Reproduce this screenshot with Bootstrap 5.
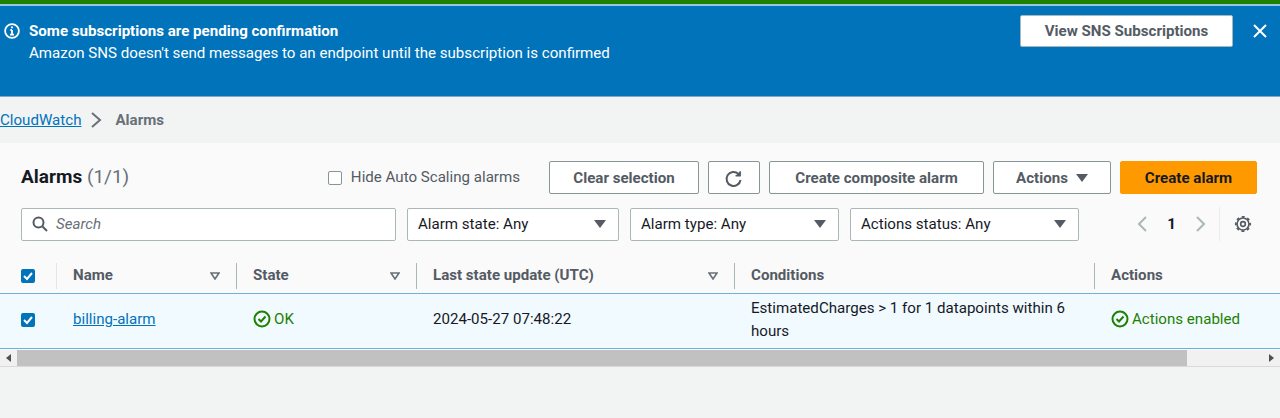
<!DOCTYPE html>
<html lang="en">
<head>
  <meta charset="UTF-8">
  <title>CloudWatch — Alarms</title>
  <link href="https://cdn.jsdelivr.net/npm/bootstrap@5.3.2/dist/css/bootstrap.min.css" rel="stylesheet">
  <style>
    body { background: #f2f3f3; font-family: Roboto, "Liberation Sans", sans-serif; font-size: 15.1px; color: #16191f; height: 418px; overflow: hidden; }
    .top-line { height: 6px; background: #1d8102; border-bottom: 2px solid #9cc4de; }
    .sns-flash { height: 91px; background: #0073bb; color: #fff; padding: 15px 13px 0 4px; border-bottom: 1px solid #7aa9c9; }
    .flash-icon { margin: 2px 9px 0 0; }
    .sns-flash .flash-title { font-weight: 700; line-height: 20px; }
    .sns-flash .flash-text { line-height: 24px; }
    .flash-right { margin-top: -6px; }
    .sns-btn { width: 213px; height: 32px; background: #fff; color: #545b64; font-weight: 700; font-size: 15.1px; border: 1px solid #aab7b8; border-radius: 2px; padding: 0; margin-right: 20px; }
    .crumbs { height: 46px; line-height: 46px; }
    .crumbs a { color: #0073bb; }
    .crumbs svg { margin: 0 10px 0 8px; }
    .crumbs .here { color: #687078; font-weight: 700; }
    .alarm-panel { height: 224px; background: #fafafa; border-bottom: 2px solid #d5dbdb; }
    .panel-head { height: 116px; padding: 18px 23px 0 21px; }
    .panel-title { font-size: 19px; font-weight: 700; line-height: 30px; padding-bottom: 2px; }
    .panel-title span { font-weight: 400; color: #687078; }
    .aws-btn { height: 33px; background: #fff; color: #545b64; font-weight: 700; font-size: 15.1px; border: 1px solid #879596; border-radius: 2px; padding: 1px 0 0; margin-right: 9px; }
    .aws-btn-primary { background: #ff9900; border-color: #ff9900; color: #16191f; margin-right: 0; }
    .hide-check { width: 14px; height: 14px; background: #fff; border: 1px solid #879596; border-radius: 2px; }
    .hide-label { color: #545b64; margin: 0 29px 0 9px; }
    .aws-field { height: 33px; background: #fff; border: 1px solid #aab7b8; border-radius: 2px; padding: 0 12px 0 10px; color: #16191f; }
    .field-search { width: 375px; color: #687078; font-style: italic; }
    .arrow-down { width: 0; height: 0; border-left: 6px solid transparent; border-right: 6px solid transparent; border-top: 8px solid #545b64; }
    .page-num { font-weight: 700; margin: 0 19px; }
    .alarm-table { table-layout: fixed; width: 1280px; margin: 0; }
    .alarm-table th { height: 34px; padding: 0 0 0 16px; background: #fafafa; color: #545b64; font-weight: 700; border-bottom: 0; vertical-align: middle; }
    .alarm-table td { height: 55px; padding: 0 8px 2px 16px; background: #f1faff; color: #16191f; vertical-align: middle; border-top: 1px solid #6fb0d8; border-bottom: 1px solid #6fb0d8; line-height: 23px; }
    .alarm-table .name-cell { padding-left: 16px; }
    .alarm-table .check-cell { padding-left: 21px; }
    .sep-right { border-right: 1px solid #aab7b8; }
    .sep-faint { border-right: 1px solid #e3e6e6; }
    .th-box { height: 26px; display: flex; align-items: center; justify-content: space-between; padding-right: 16px; }
    .aws-check { width: 14px; height: 14px; background: #0073bb; border-radius: 2px; display: flex; align-items: center; justify-content: center; }
    .alarm-table td.state-ok, .state-ok { color: #1d8102; }
    .alarm-table td.state-ok { padding-top: 2px; padding-bottom: 0; }
    .state-ok .d-inline-flex { gap: 3px !important; }
    .name-link { color: #0073bb; }
    .fake-scroll { height: 16px; display: flex; background: #f1f1f1; margin-top: 1px; }
    .scroll-end { width: 17px; display: flex; align-items: center; justify-content: center; color: #505050; }
    .scroll-thumb { width: 1170px; background: #c1c1c1; }
    .scroll-rest { flex: 1; }
    .btn-clear { width: 150px; }
    .btn-refresh { width: 52px; }
    .btn-composite { width: 215px; }
    .btn-actions { width: 118px; }
    .btn-create { width: 137px; }
    .filter-row { margin-top: 13px; }
    .field-state { width: 212px; margin-left: 11px; }
    .field-type { width: 209px; margin-left: 11px; }
    .field-status { width: 229px; margin-left: 11px; }
    .gear-box { margin-left: 12px; padding-left: 14px; margin-right: 5px; border-left: 1px solid #eaeded; height: 34px; display: flex; align-items: center; }
    .c1 { width: 57px; } .c2 { width: 180px; } .c3 { width: 180px; } .c4 { width: 318px; } .c5 { width: 360px; } .c6 { width: 185px; }
  </style>
</head>
<body>
<div class="top-line"></div>

<div class="sns-flash d-flex justify-content-between align-items-start">
  <div class="d-flex">
    <svg class="flash-icon" width="16" height="16" viewBox="0 0 16 16" fill="none" stroke="#fff" stroke-width="1.8">
      <circle cx="8" cy="8" r="6.9"/>
      <path d="M8 7v4.5M6 11.7h4M6.4 7H8"/>
      <path d="M8 3.6v1.7" stroke-width="2"/>
    </svg>
    <div>
      <div class="flash-title">Some subscriptions are pending confirmation</div>
      <div class="flash-text">Amazon SNS doesn't send messages to an endpoint until the subscription is confirmed</div>
    </div>
  </div>
  <div class="d-flex align-items-center flash-right">
    <button class="sns-btn" type="button">View SNS Subscriptions</button>
    <svg width="14" height="14" viewBox="0 0 14 14" stroke="#fff" stroke-width="2" fill="none"><path d="M1 1l12 12M13 1L1 13"/></svg>
  </div>
</div>

<div class="crumbs d-flex align-items-center">
  <a href="#">CloudWatch</a>
  <svg width="16" height="18" viewBox="0 0 16 18" fill="none" stroke="#687078" stroke-width="2"><path d="M3 2l8 7-8 7"/></svg>
  <span class="here">Alarms</span>
</div>

<div class="alarm-panel">
  <div class="panel-head">
    <div class="d-flex align-items-center">
      <div class="panel-title me-auto">Alarms <span>(1/1)</span></div>
      <span class="hide-check"></span>
      <span class="hide-label">Hide Auto Scaling alarms</span>
      <button class="aws-btn btn-clear" type="button">Clear selection</button>
      <button class="aws-btn btn-refresh" type="button">
        <svg width="20" height="20" viewBox="0 0 20 20" fill="none" stroke="#545b64" stroke-width="2"><path d="M16.5 11a7 7 0 1 1-2.2-6.2"/><path d="M16.2 2.2v4.6h-4.6" fill="#545b64" stroke-width="1.4"/></svg>
      </button>
      <button class="aws-btn btn-composite" type="button">Create composite alarm</button>
      <button class="aws-btn btn-actions d-inline-flex align-items-center justify-content-center" type="button">Actions<span class="arrow-down ms-2"></span></button>
      <button class="aws-btn aws-btn-primary btn-create" type="button">Create alarm</button>
    </div>
    <div class="d-flex align-items-center filter-row">
      <div class="aws-field field-search d-flex align-items-center">
        <svg class="me-2" width="16" height="16" viewBox="0 0 16 16" fill="none" stroke="#545b64" stroke-width="2"><circle cx="6.5" cy="6.5" r="5"/><path d="M10.5 10.5l4.5 4.5"/></svg>
        Search
      </div>
      <div class="aws-field field-state d-flex align-items-center justify-content-between">Alarm state: Any<span class="arrow-down"></span></div>
      <div class="aws-field field-type d-flex align-items-center justify-content-between">Alarm type: Any<span class="arrow-down"></span></div>
      <div class="aws-field field-status d-flex align-items-center justify-content-between">Actions status: Any<span class="arrow-down"></span></div>
      <svg class="ms-auto" width="12" height="18" viewBox="0 0 12 18" fill="none" stroke="#aab7b8" stroke-width="2"><path d="M10 2L3 9l7 7"/></svg>
      <span class="page-num">1</span>
      <svg width="12" height="18" viewBox="0 0 12 18" fill="none" stroke="#aab7b8" stroke-width="2"><path d="M2 2l7 7-7 7"/></svg>
      <div class="gear-box">
        <svg width="18" height="18" viewBox="0 0 20 20" fill="none" stroke="#545b64">
          <circle cx="10" cy="10" r="6.6" stroke-width="1.8"/>
          <circle cx="10" cy="10" r="8" stroke-width="2" stroke-dasharray="3.2 3.08" stroke-dashoffset="1.6"/>
          <circle cx="10" cy="10" r="2.6" stroke-width="1.8"/>
        </svg>
      </div>
    </div>
  </div>

  <table class="table alarm-table">
    <colgroup><col class="c1"><col class="c2"><col class="c3"><col class="c4"><col class="c5"><col class="c6"></colgroup>
    <thead>
      <tr>
        <th class="check-cell"><div class="th-box sep-faint"><span class="aws-check"><svg width="10" height="10" viewBox="0 0 10 10" fill="none" stroke="#fff" stroke-width="2"><path d="M1 5l3 3 5-6"/></svg></span></div></th>
        <th class="name-cell"><div class="th-box sep-right">Name <svg width="10" height="8" viewBox="0 0 10 8" fill="none" stroke="#687078" stroke-width="1.6"><path d="M1 1h8L5 7z"/></svg></div></th>
        <th><div class="th-box sep-right">State <svg width="10" height="8" viewBox="0 0 10 8" fill="none" stroke="#687078" stroke-width="1.6"><path d="M1 1h8L5 7z"/></svg></div></th>
        <th><div class="th-box sep-right">Last state update (UTC) <svg width="10" height="8" viewBox="0 0 10 8" fill="none" stroke="#687078" stroke-width="1.6"><path d="M1 1h8L5 7z"/></svg></div></th>
        <th><div class="th-box sep-right">Conditions</div></th>
        <th>Actions</th>
      </tr>
    </thead>
    <tbody>
      <tr>
        <td class="check-cell"><span class="aws-check"><svg width="10" height="10" viewBox="0 0 10 10" fill="none" stroke="#fff" stroke-width="2"><path d="M1 5l3 3 5-6"/></svg></span></td>
        <td class="name-cell"><a class="name-link" href="#">billing-alarm</a></td>
        <td class="state-ok"><span class="d-inline-flex align-items-center gap-1"><svg width="18" height="18" viewBox="0 0 18 18" fill="none" stroke="#1d8102" stroke-width="2"><circle cx="9" cy="9" r="7.5"/><path d="M5.5 9l2.5 2.5 4.5-5"/></svg>OK</span></td>
        <td>2024-05-27 07:48:22</td>
        <td>EstimatedCharges &gt; 1 for 1 datapoints within 6 hours</td>
        <td class="state-ok"><span class="d-inline-flex align-items-center gap-1 text-nowrap"><svg width="18" height="18" viewBox="0 0 18 18" fill="none" stroke="#1d8102" stroke-width="2"><circle cx="9" cy="9" r="7.5"/><path d="M5.5 9l2.5 2.5 4.5-5"/></svg>Actions enabled</span></td>
      </tr>
    </tbody>
  </table>

  <div class="fake-scroll">
    <div class="scroll-end"><svg width="5" height="8" viewBox="0 0 5 8" fill="#505050"><path d="M5 0v8L0 4z"/></svg></div>
    <div class="scroll-thumb"></div>
    <div class="scroll-rest"></div>
    <div class="scroll-end"><svg width="5" height="8" viewBox="0 0 5 8" fill="#505050"><path d="M0 0v8l5-4z"/></svg></div>
  </div>
</div>
</body>
</html>
